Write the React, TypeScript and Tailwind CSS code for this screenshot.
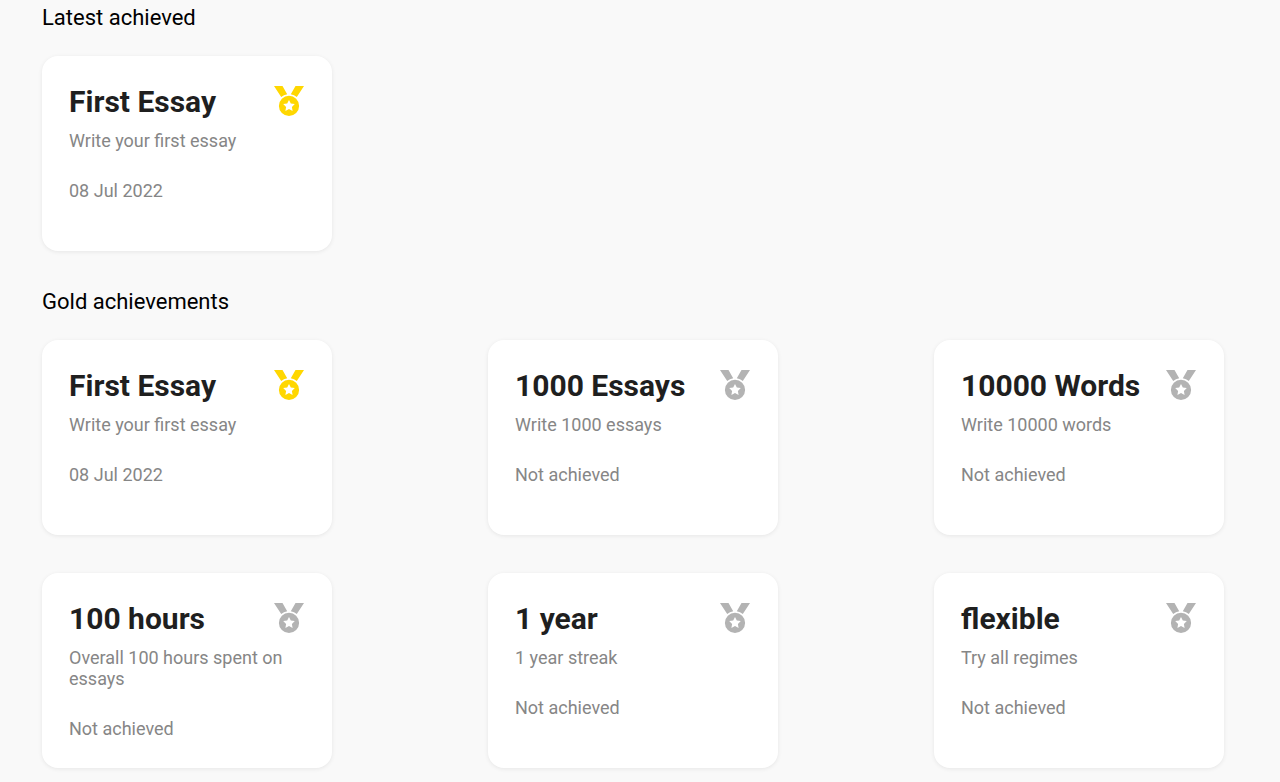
type Achievement = {
  title: string;
  description: string;
  status: string;
  achieved?: boolean;
};

const firstEssay: Achievement = {
  title: "First Essay",
  description: "Write your first essay",
  status: "08 Jul 2022",
  achieved: true,
};

const gold: Achievement[] = [
  firstEssay,
  { title: "1000 Essays", description: "Write 1000 essays", status: "Not achieved" },
  { title: "10000 Words", description: "Write 10000 words", status: "Not achieved" },
  { title: "100 hours", description: "Overall 100 hours spent on essays", status: "Not achieved" },
  { title: "1 year", description: "1 year streak", status: "Not achieved" },
  { title: "flexible", description: "Try all regimes", status: "Not achieved" },
];

function Medal({ achieved }: { achieved?: boolean }) {
  return (
    <svg
      viewBox="0 0 30 30"
      aria-hidden="true"
      className={achieved ? "size-[30px] shrink-0 fill-[#ffd700]" : "size-[30px] shrink-0 fill-[#b3b3b3]"}
    >
      <path d="M0 0H8.5L13.2 8.3Q9.8 8.9 7.2 10.9ZM30 0H21.5L16.8 8.3Q20.2 8.9 22.8 10.9Z" />
      <path
        fillRule="evenodd"
        d="M15 9.8A10.1 10.1 0 1 0 15 30A10.1 10.1 0 1 0 15 9.8ZM15 14L16.8 17.5L20.8 18.1L17.9 20.9L18.6 24.9L15 23L11.4 24.9L12.1 20.9L9.2 18.1L13.2 17.5Z"
      />
    </svg>
  );
}

function Card({ item }: { item: Achievement }) {
  return (
    <article className="min-h-[195px] w-[290px] rounded-2xl bg-white pt-7 pr-7 pl-[27px] shadow-[0_1px_4px_rgba(0,0,0,0.08)]">
      <div className="flex items-start justify-between">
        <h3 className="text-[30px] leading-9 font-bold text-[#1f1f1f]">{item.title}</h3>
        <div className="pt-0.5">
          <Medal achieved={item.achieved} />
        </div>
      </div>
      <p className="mt-2.5 text-lg leading-[21px] text-[#868686]">{item.description}</p>
      <p className="mt-[29px] text-lg leading-[21px] text-[#868686]">{item.status}</p>
    </article>
  );
}

export default function App() {
  return (
    <main className="min-h-screen bg-[#f9f9f9] pr-14 pb-3.5 pl-[42px] font-[Roboto,sans-serif]">
      <section>
        <h2 className="pt-1 text-[22px] leading-7 text-black">Latest achieved</h2>
        <div className="mt-6 flex">
          <Card item={firstEssay} />
        </div>
      </section>
      <section className="mt-[37px]">
        <h2 className="text-[22px] leading-7 text-black">Gold achievements</h2>
        <div className="mt-6 grid grid-cols-[repeat(3,auto)] justify-between gap-y-[38px]">
          {gold.map((item) => (
            <Card key={item.title} item={item} />
          ))}
        </div>
      </section>
    </main>
  );
}
